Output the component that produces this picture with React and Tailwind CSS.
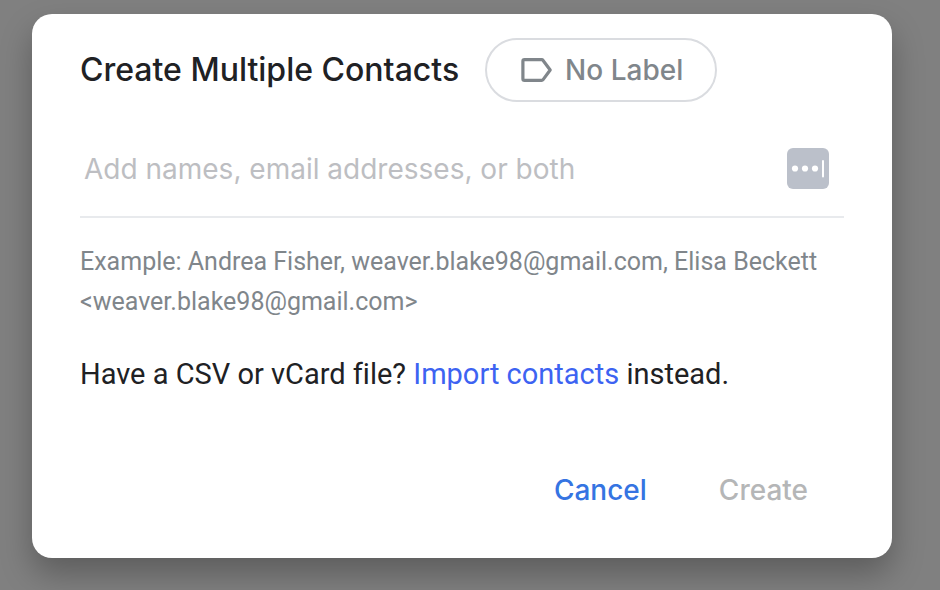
import React from "react";

function LabelIcon() {
  return (
    <svg width="34" height="26" viewBox="0 0 34 26" fill="none" aria-hidden="true">
      <path
        d="M5.5 2.7H22.6a1.8 1.8 0 0 1 1.5.7L31.2 13l-7.1 9.6a1.800 1.800 0 0 1-1.500.7H5.5a1.600 1.600 0 0 1-1.600-1.600V4.300A1.600 1.600 0 0 1 5.500 2.700Z"
        stroke="#80868b"
        strokeWidth="3.2"
        strokeLinejoin="round"
      />
    </svg>
  );
}

function AutofillIcon() {
  return (
    <svg width="42" height="42" viewBox="0 0 42 42" aria-hidden="true">
      <rect width="42" height="41" rx="6" fill="#bbc0ca" />
      <circle cx="8" cy="20.5" r="3.1" fill="#fff" />
      <circle cx="18" cy="20.5" r="3.1" fill="#fff" />
      <circle cx="28" cy="20.5" r="3.1" fill="#fff" />
      <rect x="35" y="12" width="2" height="17.500" rx="1" fill="#fff" />
    </svg>
  );
}

export default function App() {
  return (
    <div className="min-h-screen bg-[#808080] px-8 pt-[14px] font-['Roboto',sans-serif] [font-variant-ligatures:none] sm:pr-12">
      <main
        role="dialog"
        aria-labelledby="dialog-title"
        className="rounded-[20px] bg-white px-12 pt-6 pb-8 shadow-[0_16px_32px_rgba(0,0,0,0.28)]"
      >
        <header className="flex items-center gap-[26px]">
          <h1 id="dialog-title" className="font-['Inter',sans-serif] text-[32px] leading-10 font-medium text-[#202124]">
            Create Multiple Contacts
          </h1>
          <button className="flex h-16 items-center gap-3 rounded-full border-2 border-[#dadce0] px-8 font-['Inter',sans-serif] text-[28px] font-medium text-[#80868b]">
            <LabelIcon />
            No Label
          </button>
        </header>

        <div className="mt-4 flex h-[100px] items-center border-b-2 border-[#e8eaed] pt-[3px] pr-[15px] pl-1">
          <input
            type="text"
            aria-label="Names and email addresses"
            placeholder="Add names, email addresses, or both"
            className="min-w-0 flex-1 font-['Inter',sans-serif] text-[28px] outline-none placeholder:text-[#bdbec2]"
          />
          <AutofillIcon />
        </div>

        <p className="mt-6 text-[25px] leading-10 text-[#80868b]">
          Example: Andrea Fisher, weaver.blake98@gmail.com, Elisa Beckett &lt;weaver.blake98@gmail.com&gt;
        </p>

        <p className="mt-8 text-[29px] leading-10 text-[#202124]">
          Have a CSV or vCard file?{" "}
          <a href="#import" className="text-[#3d63f2]">Import contacts</a> instead.
        </p>

        <footer className="mt-15 flex justify-end gap-2 pr-1 font-['Inter',sans-serif] text-[28px] font-medium">
          <button className="h-[72px] px-8 text-[#3574e2]">Cancel</button>
          <button className="h-[72px] px-8 text-[#b5b6b7]">Create</button>
        </footer>
      </main>
    </div>
  );
}
